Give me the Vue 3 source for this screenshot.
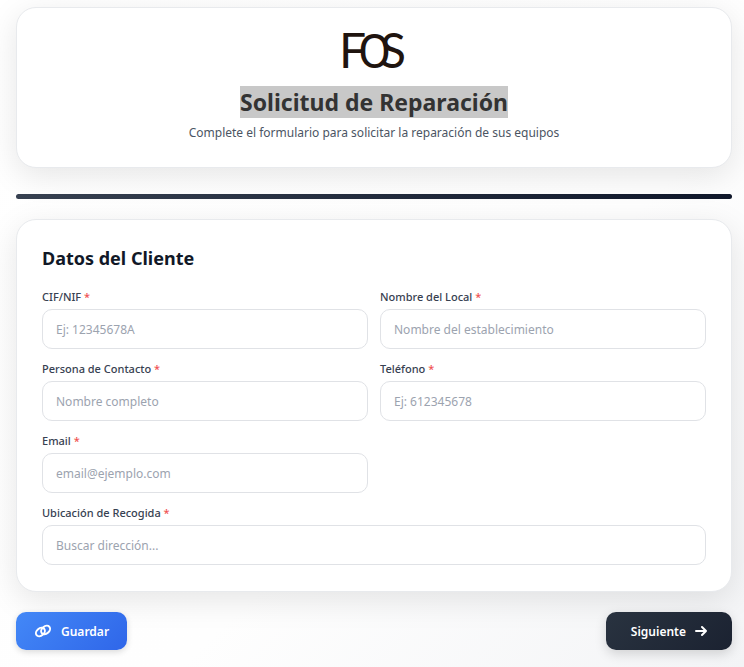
<script setup>
import { reactive } from "vue";

const form = reactive({
  cif: "",
  local: "",
  contacto: "",
  telefono: "",
  email: "",
  ubicacion: ""
});

const fields = [
  { id: "cif", label: "CIF/NIF", placeholder: "Ej: 12345678A", type: "text" },
  { id: "local", label: "Nombre del Local", placeholder: "Nombre del establecimiento", type: "text" },
  { id: "contacto", label: "Persona de Contacto", placeholder: "Nombre completo", type: "text" },
  { id: "telefono", label: "Teléfono", placeholder: "Ej: 612345678", type: "tel" },
  { id: "email", label: "Email", placeholder: "email@ejemplo.com", type: "email" },
  { id: "ubicacion", label: "Ubicación de Recogida", placeholder: "Buscar dirección...", type: "text", wide: true }
];
</script>

<template>
  <main class="page">
    <header class="card header">
      <svg class="logo" viewBox="0 0 64 40" role="img" aria-label="FOS">
        <text x="-3" y="37">F</text>
        <text class="round" x="16" y="37">O</text>
        <text x="38" y="37">S</text>
      </svg>
      <h1><span class="selected">Solicitud de Reparación</span></h1>
      <p>Complete el formulario para solicitar la reparación de sus equipos</p>
    </header>

    <div class="progress"></div>

    <form class="form" @submit.prevent>
      <section class="card client">
        <h2>Datos del Cliente</h2>
        <div class="grid">
          <div v-for="f in fields" :key="f.id" class="field" :class="{ wide: f.wide }">
            <label :for="f.id">{{ f.label }} <span class="required">*</span></label>
            <input :id="f.id" v-model="form[f.id]" :type="f.type" :placeholder="f.placeholder" />
          </div>
        </div>
      </section>

      <div class="actions">
        <button type="button" class="btn save-btn">
          <svg width="18" height="14" viewBox="0 0 18 14" fill="none" stroke="currentColor" stroke-width="2">
            <ellipse cx="6.4" cy="8" rx="5" ry="3.6" transform="rotate(-40 6.4 8)" />
            <ellipse cx="11.6" cy="6" rx="5" ry="3.6" transform="rotate(-40 11.6 6)" />
          </svg>
          Guardar
        </button>
        <button type="submit" class="btn next-btn">
          Siguiente
          <svg width="12" height="12" viewBox="0 0 12 12" fill="none" stroke="currentColor" stroke-width="2" stroke-linecap="round" stroke-linejoin="round">
            <path d="M1 6h10M7 2l4 4-4 4" />
          </svg>
        </button>
      </div>
    </form>
  </main>
</template>

<style>
body {
  background: linear-gradient(135deg, #ffffff 0%, #fefefe 60%, #f3f4f6 100%);
}
</style>

<style scoped>
* {
  box-sizing: border-box;
  font-family: "Segoe UI", "Noto Sans", sans-serif;
}

.page {
  padding: 7px 12px 17px 16px;
}

.card {
  background: #fff;
  border: 1px solid #e8eaed;
  border-radius: 20px;
  box-shadow: 0 8px 32px rgba(0, 0, 0, 0.1);
}

.header {
  display: flex;
  flex-direction: column;
  align-items: center;
  padding: 23px 24px 23px;
  text-align: center;
}

.logo {
  width: 64px;
  height: 40px;
  margin-bottom: 15px;
  overflow: visible;
}
.logo text {
  font-family: Lato, sans-serif;
  font-size: 48px;
  fill: #1f140f;
}
.logo .round {
  font-family: Roboto, sans-serif;
}

h1 {
  margin: 0;
  font-size: 23px;
  line-height: 32px;
  color: #333;
}

.selected {
  display: block;
  background: #c8c8c8;
}

.header p {
  margin: 4px 0 0;
  font-size: 12px;
  line-height: 22px;
  color: #4b5563;
}

.progress {
  height: 5px;
  margin: 26px 0 20px;
  border-radius: 3px;
  background: linear-gradient(90deg, #374151, #0f172a);
}

.client {
  padding: 24px 25px 26px;
}

h2 {
  margin: 0 0 17px;
  font-size: 18px;
  line-height: 28px;
  color: #111827;
}

.grid {
  display: grid;
  grid-template-columns: 1fr 1fr;
  gap: 12px;
}

.field {
  display: flex;
  flex-direction: column;
  gap: 4px;
}
.wide { grid-column: 1 / -1; }

label {
  font-size: 11px;
  font-weight: 500;
  line-height: 16px;
  color: #374151;
}
.required { color: #f05252; }

input {
  width: 100%;
  height: 40px;
  padding: 0 13px;
  border: 1px solid #e0e2e6;
  border-radius: 10px;
  background: #fff;
  font-size: 12px;
  color: #111827;
}
input::placeholder { color: #9ca3af; }

.actions {
  display: flex;
  justify-content: space-between;
  margin-top: 20px;
}

.btn {
  display: flex;
  align-items: center;
  height: 38px;
  border: none;
  border-radius: 10px;
  font-size: 12px;
  font-weight: 600;
  color: #fff;
  cursor: pointer;
}

.save-btn {
  gap: 9px;
  padding: 0 18px;
  background: linear-gradient(135deg, #4388f7, #2f66e9);
  box-shadow: 0 2px 6px rgba(0, 0, 0, 0.15);
}

.next-btn {
  gap: 9px;
  padding: 0 25px;
  background: linear-gradient(135deg, #293340, #1b2231);
  box-shadow: 0 4px 12px rgba(0, 0, 0, 0.15);
}
</style>
